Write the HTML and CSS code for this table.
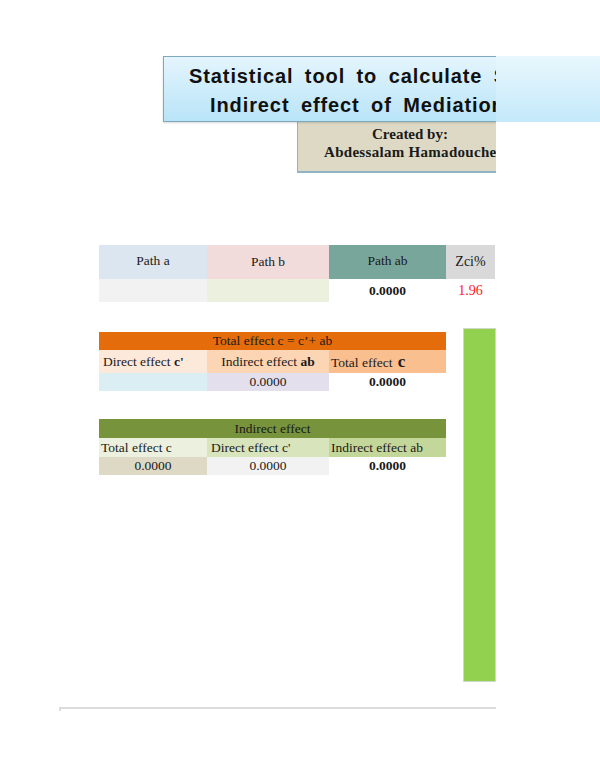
FILE: index.html
```html
<!DOCTYPE html>
<html>
<head>
<meta charset="utf-8">
<link rel="stylesheet" href="styles.css">
</head>
<body>
<div class="page">
  <div class="title-row">
    <div class="title-box">
      <div class="title-line l1">Statistical tool to calculate Sobel test</div>
      <div class="title-line l2">Indirect effect of Mediation</div>
    </div>
    <div class="title-ext"></div>
  </div>
  <div class="credit">
    <div class="credit-line c1">Created by:</div>
    <div class="credit-line c2">Abdessalam Hamadouche</div>
  </div>

  <div class="grid t1">
    <div class="cell h pa"><span>Path a</span></div>
    <div class="cell h pb"><span>Path b</span></div>
    <div class="cell h pab"><span>Path ab</span></div>
    <div class="cell h zci"><span>Zci%</span></div>
    <div class="cell v1"></div>
    <div class="cell v2"></div>
    <div class="cell v3 bold"><span>0.0000</span></div>
    <div class="cell v4 red"><span>1.96</span></div>
  </div>

  <div class="section">
    <div class="left-col">
      <div class="grid3 t2">
        <div class="cell span3 orange"><span>Total effect c = c’+ ab</span></div>
        <div class="cell s1 left"><span>Direct effect <b>c'</b></span></div>
        <div class="cell s2"><span>Indirect effect <b>ab</b></span></div>
        <div class="cell s3 left"><span>Total effect <b class="bigc">c</b></span></div>
        <div class="cell w1"></div>
        <div class="cell w2"><span>0.0000</span></div>
        <div class="cell w3 bold"><span>0.0000</span></div>
      </div>
      <div class="grid3 t3">
        <div class="cell span3 olive"><span>Indirect effect</span></div>
        <div class="cell u1 left"><span>Total effect c</span></div>
        <div class="cell u2 left"><span>Direct effect c'</span></div>
        <div class="cell u3 left"><span>Indirect effect ab</span></div>
        <div class="cell x1"><span>0.0000</span></div>
        <div class="cell x2"><span>0.0000</span></div>
        <div class="cell x3 bold"><span>0.0000</span></div>
      </div>
    </div>
    <div class="green-bar"></div>
  </div>

  <div class="bottom-line"></div>
</div>
</body>
</html>
```

FILE: styles.css
```css
html, body {
  margin: 0;
  padding: 0;
  background: #ffffff;
}
.page {
  width: 600px;
  height: 776px;
  overflow: hidden;
  font-family: "Liberation Serif", "Times New Roman", serif;
  color: #1a1a1a;
}
.title-row {
  display: flex;
  margin-top: 56px;
  margin-left: 163px;
  height: 66px;
}
.title-box {
  width: 333px;
  height: 66px;
  box-sizing: border-box;
  border: 1px solid #7ea9bd;
  border-right: none;
  background: linear-gradient(#e4f5fd, #b9e4f8);
  overflow: hidden;
  box-shadow: 0 1px 2px rgba(0,0,0,0.15);
  font-family: "Liberation Sans", Arial, sans-serif;
  font-weight: bold;
  font-size: 20px;
  color: #111;
  white-space: nowrap;
}
.title-ext {
  flex: 1;
  height: 66px;
  background: linear-gradient(#e8f7fd, #c4e9fa);
}
.title-line {
  height: 29px;
  line-height: 29px;
  word-spacing: 5px;
  letter-spacing: 0.9px;
}
.l1 {
  margin-top: 5px;
  padding-left: 25px;
}
.l2 {
  padding-left: 46px;
}
.credit {
  margin-left: 297px;
  width: 199px;
  height: 51px;
  box-sizing: border-box;
  background: #ddd9c4;
  border-left: 1px solid #8fb4c6;
  border-bottom: 2px solid #8fb4c6;
  font-weight: bold;
  font-size: 15px;
  white-space: nowrap;
  overflow: hidden;
}
.credit-line {
  height: 18px;
  line-height: 18px;
}
.c1 {
  margin-top: 3px;
  padding-left: 74px;
}
.c2 {
  padding-left: 26px;
  letter-spacing: 0.3px;
}
.grid {
  display: grid;
  grid-template-columns: 108px 122px 117px 49px;
  margin-left: 99px;
  width: 396px;
}
.t1 {
  margin-top: 72px;
  grid-template-rows: 34px 23px;
}
.cell {
  display: flex;
  align-items: center;
  justify-content: center;
  font-size: 13.5px;
  white-space: nowrap;
  overflow: hidden;
}
.h {
  padding-bottom: 3px;
  box-sizing: border-box;
}
.pa { background: #dce6f1; }
.pb { background: #f2dcdb; padding-bottom: 0; }
.pab { background: #79a69a; }
.zci { background: #d9d9d9; font-size: 14px; padding-bottom: 0; }
.v1 { background: #f2f2f2; }
.v2 { background: #ebf1de; }
.v3 { background: #ffffff; }
.v4 { background: #ffffff; }
.bold { font-weight: bold; }
.red { color: #ff1a1a; font-size: 14px; }
.section {
  display: flex;
  margin-top: 26px;
  margin-left: 99px;
}
.left-col {
  width: 347px;
}
.grid3 {
  display: grid;
  grid-template-columns: 108px 122px 117px;
}
.t2 {
  margin-top: 4px;
  grid-template-rows: 18px 23px 18px;
}
.t3 {
  margin-top: 28px;
  grid-template-rows: 19px 19px 18px;
}
.span3 {
  grid-column: 1 / 4;
  font-size: 13.5px;
}
.left {
  justify-content: flex-start;
  padding-left: 4px;
}
.orange { background: #e46c0a; }
.s1 { background: #fde9d9; }
.s2 { background: #fcd5b4; }
.s3 { background: #fabf8f; padding-left: 2px; }
.bigc { font-size: 17px; margin-left: 2px; }
.w1 { background: #daeef3; }
.w2 { background: #e4dfec; }
.w3 { background: #ffffff; }
.olive { background: #77933c; }
.u1 { background: #ebf1de; padding-left: 2px; }
.u2 { background: #d8e4bc; }
.u3 { background: #c4d79b; padding-left: 2px; }
.x1 { background: #ddd9c4; }
.x2 { background: #f2f2f2; }
.x3 { background: #ffffff; }
.green-bar {
  margin-left: 17px;
  width: 33px;
  height: 354px;
  box-sizing: border-box;
  background: #92d050;
  border: 1px solid #d0d8c8;
}
.bottom-line {
  margin-top: 25px;
  margin-left: 59px;
  width: 437px;
  height: 2px;
  background: #dcdcdc;
  position: relative;
}
.bottom-line::after {
  content: "";
  position: absolute;
  left: 0;
  top: 2px;
  width: 2px;
  height: 2px;
  background: #dcdcdc;
}
```
